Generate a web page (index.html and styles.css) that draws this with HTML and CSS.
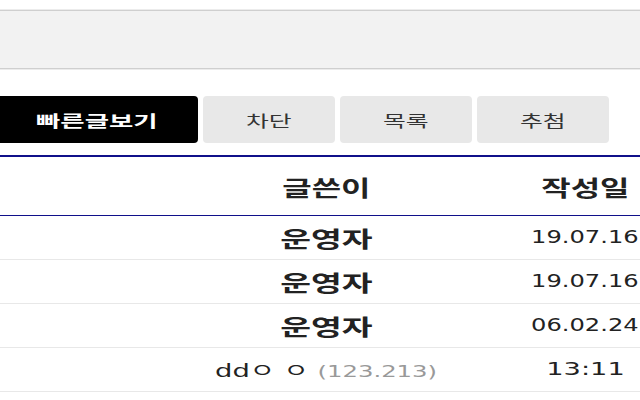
FILE: index.html
```html
<html>
<head>
    <meta charset="utf-8">
    <link rel="stylesheet" href="styles.css">
</head>

<body>
    <div class="search-bar"></div>

    <div class="tabs">
        <a class="tab tab-active"><span class="wide">빠른글보기</span></a>
        <a class="tab"><span class="wide">차단</span></a>
        <a class="tab"><span class="wide">목록</span></a>
        <a class="tab"><span class="wide">추첨</span></a>
    </div>

    <table class="board">
        <colgroup>
            <col class="col-title">
            <col class="col-writer">
            <col class="col-gap">
            <col class="col-date">
        </colgroup>
        <thead>
            <tr>
                <th></th>
                <th><span class="wide">글쓴이</span></th>
                <th></th>
                <th><span class="wide">작성일</span></th>
            </tr>
        </thead>
        <tbody>
            <tr>
                <td></td>
                <td class="writer admin"><span class="wide">운영자</span></td>
                <td></td>
                <td class="date"><span class="wide">19.07.16</span></td>
            </tr>
            <tr>
                <td></td>
                <td class="writer admin"><span class="wide">운영자</span></td>
                <td></td>
                <td class="date"><span class="wide">19.07.16</span></td>
            </tr>
            <tr>
                <td></td>
                <td class="writer admin"><span class="wide">운영자</span></td>
                <td></td>
                <td class="date"><span class="wide">06.02.24</span></td>
            </tr>
            <tr>
                <td></td>
                <td class="writer"><span class="wide">ddㅇ ㅇ <span class="ip">(123.213)</span></span></td>
                <td></td>
                <td class="date"><span class="wide time">13:11</span></td>
            </tr>
        </tbody>
    </table>
</body>
</html>
```

FILE: styles.css
```css
body {
    margin: 0;
    background: #fff;
    font-family: "Noto Sans CJK KR", sans-serif;
    color: #222;
    overflow: hidden;
}

.wide {
    display: inline-block;
    transform: scaleX(1.45);
    white-space: nowrap;
}

.search-bar {
    margin-top: 10px;
    height: 57px;
    background-color: #f2f2f2;
    border-top: 1px solid #cfcfcf;
    border-bottom: 1px solid #cfcfcf;
    box-shadow: 0 1px 0 #ececec, 0 -1px 0 #ececec;
}

.tabs {
    display: flex;
    gap: 5px;
    margin-top: 27px;
    margin-left: -5px;
}

    .tabs .tab {
        display: flex;
        align-items: center;
        justify-content: center;
        width: 132px;
        height: 47px;
        border-radius: 4px;
        background-color: #e8e8e8;
        color: #333;
        font-size: 16px;
    }

        .tabs .tab .wide {
            transform: scaleX(1.55);
        }

    .tabs .tab-active {
        width: 203px;
        background-color: #000;
        color: #fff;
        font-weight: bold;
    }

        .tabs .tab-active .wide {
            transform: scaleX(1.65);
        }

.board {
    width: 640px;
    margin-top: 12px;
    border-collapse: collapse;
    table-layout: fixed;
}

    .board .col-title { width: 236px; }
    .board .col-writer { width: 180px; }
    .board .col-gap { width: 114px; }
    .board .col-date { width: 110px; }

    .board thead tr {
        border-top: 2px solid #10108a;
        border-bottom: 1px solid #10108a;
    }

    .board th {
        height: 59px;
        padding: 0;
        font-size: 22px;
        font-weight: bold;
        color: #222;
        text-align: center;
    }

    .board tbody tr {
        border-bottom: 1px solid #e8e8e8;
    }

    .board td {
        height: 44px;
        padding: 0;
        text-align: center;
        font-family: "DejaVu Sans", "Noto Sans CJK KR", sans-serif;
        font-size: 17px;
        color: #222;
    }

    .board .admin {
        font-family: "Noto Sans CJK KR", sans-serif;
        font-size: 22px;
        font-weight: bold;
    }

        .board .admin .wide {
            transform: scaleX(1.5);
        }

    .board .writer .wide {
        transform: scaleX(1.52);
    }

    .board .writer:not(.admin) {
        font-size: 18px;
    }

    .board .date .wide {
        transform: scaleX(1.42);
    }

    .board .date .time {
        transform: scaleX(1.6);
    }

    .board .ip {
        color: #999;
        font-size: 16px;
    }
```
